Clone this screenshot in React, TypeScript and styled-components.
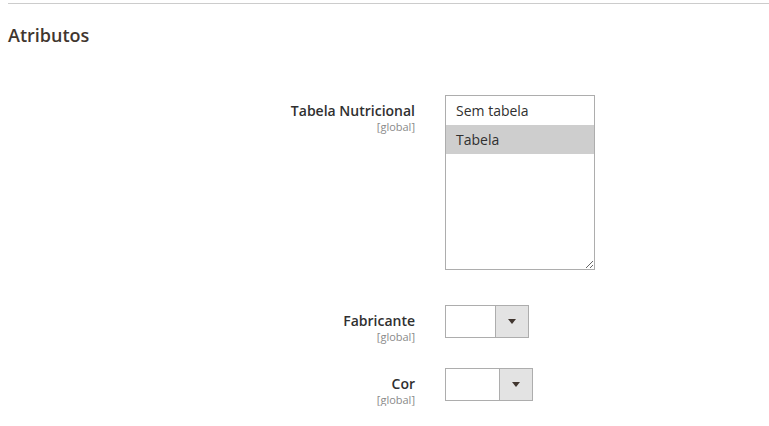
import styled, { createGlobalStyle } from "styled-components";

const Global = createGlobalStyle`
  html, body {
    margin: 0;
    padding: 0;
    background: #fff;
    font-family: "Open Sans", "Liberation Sans", sans-serif;
    color: #303030;
  }
`;

const Page = styled.div`
  padding: 3px 0 0 8px;
  width: 761px;
`;

const Section = styled.section`
  border-top: 1px solid #ccc;
`;

const Title = styled.h2`
  margin: 0;
  padding: 20px 0 0;
  font-size: 18px;
  line-height: 22px;
  font-weight: 600;
  color: #41362f;
`;

const Form = styled.div`
  display: flex;
  flex-direction: column;
  padding-top: 49px;
`;

const Row = styled.div<{ $gap: number }>`
  display: grid;
  grid-template-columns: 407px auto;
  column-gap: 30px;
  align-items: start;
  margin-bottom: ${(p) => p.$gap}px;
`;

const Label = styled.div`
  text-align: right;
  padding-top: 7px;
`;

const LabelText = styled.div`
  font-size: 14px;
  line-height: 18px;
  font-weight: 600;
  color: #303030;
`;

const Scope = styled.div`
  font-size: 11px;
  line-height: 13px;
  color: #8a8a8a;
`;

const ListBox = styled.div`
  box-sizing: border-box;
  width: 150px;
  height: 175px;
  border: 1px solid #adadad;
  overflow: auto;
  resize: both;
  background: #fff;
`;

const Option = styled.div<{ $selected?: boolean }>`
  height: 29px;
  line-height: 29px;
  padding-left: 10px;
  font-size: 14px;
  color: #303030;
  background: ${(p) => (p.$selected ? "#cecece" : "transparent")};
`;

const Select = styled.div<{ $width: number }>`
  box-sizing: border-box;
  display: flex;
  width: ${(p) => p.$width}px;
  height: 33px;
  border: 1px solid #adadad;
  background: #fff;
`;

const SelectValue = styled.div`
  flex: 1;
`;

const SelectButton = styled.div`
  width: 32px;
  display: flex;
  align-items: center;
  justify-content: center;
  border-left: 1px solid #adadad;
  background: #e3e3e3;
`;

const Arrow = styled.span`
  width: 0;
  height: 0;
  border-left: 4px solid transparent;
  border-right: 4px solid transparent;
  border-top: 5px solid #41362f;
`;

function Field({ label, children, gap }: { label: string; children: React.ReactNode; gap: number }) {
  return (
    <Row $gap={gap}>
      <Label>
        <LabelText>{label}</LabelText>
        <Scope>[global]</Scope>
      </Label>
      <div>{children}</div>
    </Row>
  );
}

export default function App() {
  return (
    <>
      <Global />
      <Page>
        <Section>
          <Title>Atributos</Title>
          <Form>
            <Field label="Tabela Nutricional" gap={35}>
              <ListBox>
                <Option>Sem tabela</Option>
                <Option $selected>Tabela</Option>
              </ListBox>
            </Field>
            <Field label="Fabricante" gap={25}>
              <Select $width={84}>
                <SelectValue />
                <SelectButton>
                  <Arrow />
                </SelectButton>
              </Select>
            </Field>
            <Field label="Cor" gap={0}>
              <Select $width={88}>
                <SelectValue />
                <SelectButton>
                  <Arrow />
                </SelectButton>
              </Select>
            </Field>
          </Form>
        </Section>
      </Page>
    </>
  );
}
